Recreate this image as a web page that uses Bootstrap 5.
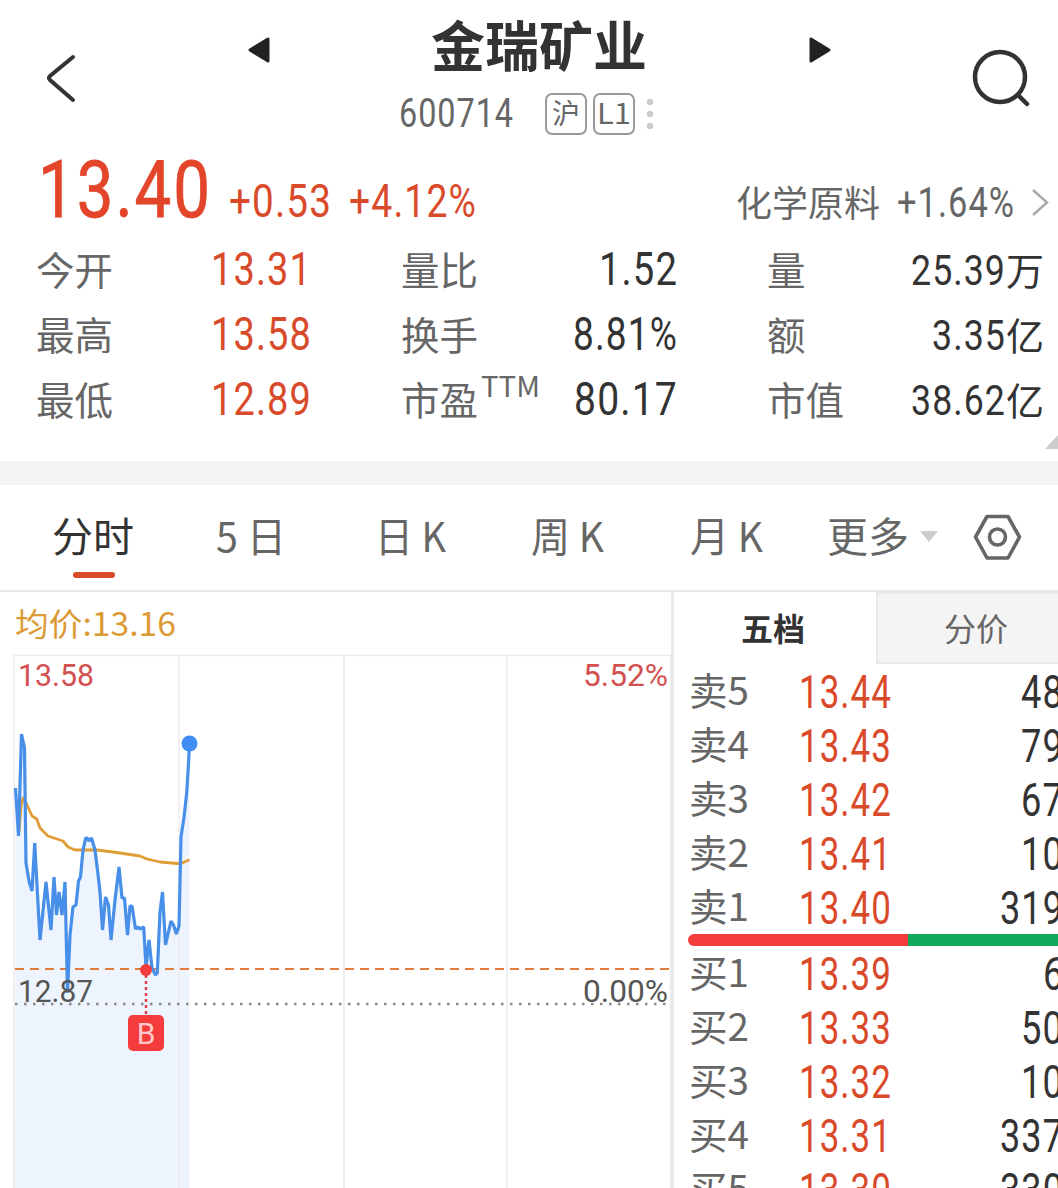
<!DOCTYPE html>
<html lang="zh-CN">
<head>
<meta charset="utf-8">
<meta name="viewport" content="width=device-width, initial-scale=1">
<title>金瑞矿业 600714</title>
<link rel="stylesheet" href="https://cdn.jsdelivr.net/npm/bootstrap@5.3.0/dist/css/bootstrap.min.css">
<style>
  :root { --ink:#333; --soft:#666; --up:#d94a2b; --rule:#e9e9e9; }
  body { width:1058px; height:1188px; overflow:hidden; background:#fff; color:var(--ink);
         font-family:"Noto Sans CJK SC",sans-serif; }
  svg { display:block; flex:none; }
  .fit { display:inline-block; white-space:nowrap; transform-origin:0 50%; flex:none; }
  .din { font-family:Roboto,"Noto Sans CJK SC",sans-serif; }
  .din .fit { letter-spacing:.03em; }
  .up { color:var(--up); }
  .soft { color:var(--soft); }

  .topbar { display:grid; grid-template-columns:248px 151px 410px 163px 86px; height:150px; }
  .stock-name { font-size:54px; font-weight:700; line-height:60px; padding:14px 0 0 32px; height:84px; }
  .stock-code { font-size:40px; line-height:60px; width:146px; }
  .tagbox { width:42px; height:42px; border:2px solid #999; border-radius:7px; font-size:28px; line-height:34px; margin-right:6px; }

  .quote { height:90px; padding-left:38px; }
  .last-price { font-size:80px; line-height:80px; color:#e2452a; width:191px; -webkit-text-stroke:.8px #e2452a; }
  .change { font-size:46px; line-height:60px; }
  .sector { font-size:36px; width:161px; line-height:50px; }
  .sector-pct { font-size:42px; width:133px; line-height:50px; }

  .stats { display:grid; grid-template-columns:175px 190px 130px 147px 89px 100px 177px; grid-auto-rows:65px;
           padding-left:36px; height:221px; position:relative; margin-top:-4px; }
  .stats > div { line-height:64px; font-size:38.5px; }
  .stats .din { font-size:46px; line-height:66px; }
  .stats .unit { font-size:38px; }
  .ttm { font-size:29px; position:relative; top:-18px; left:3px; }
  .corner { position:absolute; right:0; bottom:8px; }
  .band { height:24px; background:#f4f4f4; margin-top:4px; }

  .period-tabs { display:grid; grid-template-columns:164px 159px 156px 159px 137px 146px 85px; height:107px;
                 padding-left:52px; border-bottom:2px solid var(--rule); font-size:41px; }
  .period-tabs > div { line-height:60px; padding-top:19px; }
  .marker-line { width:42px; height:6px; border-radius:3px; background:var(--up); margin:8px 0 0 21px; }

  .panel-chart { width:674px; border-right:3px solid var(--rule); }
  .side-tabs > div { height:72px; font-size:32px; line-height:70px; }
  .tab-on { width:202px; padding-left:67px; font-weight:700; }
  .tab-off { background:#f4f4f4; border:2px solid var(--rule); border-right:0; width:182px; padding-left:66px; }
  .side-tabs > .tab-off { line-height:66px; }
  .lvl { display:grid; grid-template-columns:110px 120px 161px; height:54px; padding-left:15px; }
  .lvl > div { line-height:50px; font-size:38px; }
  .lvl > .din { font-size:46px; line-height:56px; }
  .lvl > .qty { padding-right:16px; }
  .balance { height:12px; margin-left:14px; border-radius:6px 0 0 6px; overflow:hidden; }
  .balance-red { width:220px; background:#f53c3c; }
  .balance-green { background:#12a85b; }
</style>
</head>
<body>
<header class="topbar">
  <svg width="90" height="150" viewBox="0 0 90 150"><path d="M73 57L50 76Q48 78 50 80L73 100" fill="none" stroke="#333" stroke-width="4" stroke-linecap="round"/></svg>
  <svg width="24" height="100" viewBox="0 0 24 100"><path d="M20 39v22L2 50z" fill="#222" stroke="#222" stroke-width="3" stroke-linejoin="round"/></svg>
  <div>
    <div class="stock-name"><span class="fit" data-w="216">金瑞矿业</span></div>
    <div class="d-flex align-items-center soft">
      <div class="stock-code din"><span class="fit" data-w="115">600714</span></div>
      <div class="tagbox text-center"><span class="fit">沪</span></div>
      <div class="tagbox text-center"><span class="fit" data-w="34">L1</span></div>
      <svg width="20" height="42" viewBox="0 0 20 42"><g fill="#ccc"><circle cx="9" cy="9" r="3.2"/><circle cx="9" cy="21" r="3.2"/><circle cx="9" cy="33" r="3.2"/></g></svg>
    </div>
  </div>
  <svg width="24" height="100" viewBox="0 0 24 100"><path d="M2 39v22L20 50z" fill="#222" stroke="#222" stroke-width="3" stroke-linejoin="round"/></svg>
  <svg width="80" height="150" viewBox="0 0 80 150"><g fill="none" stroke="#333" stroke-width="4.5" stroke-linecap="round"><circle cx="28" cy="77" r="25"/><path d="M46 95L55 104"/></g></svg>
</header>

<section class="quote d-flex align-items-baseline">
  <div class="last-price din"><span class="fit" data-w="174">13.40</span></div>
  <div class="change din up" style="width:120px"><span class="fit" data-w="103">+0.53</span></div>
  <div class="change din up" style="width:387px"><span class="fit" data-w="128">+4.12%</span></div>
  <div class="sector soft"><span class="fit" data-w="144">化学原料</span></div>
  <div class="sector-pct din soft"><span class="fit" data-w="118">+1.64%</span></div>
  <svg width="20" height="30" viewBox="0 0 20 30"><path d="M3 3L17 15.500L3 28" fill="none" stroke="#aaa" stroke-width="2.500"/></svg>
</section>

<section class="stats">
  <div class="soft">今开</div><div class="din up"><span class="fit" data-w="101">13.31</span></div>
  <div class="soft">量比</div><div class="din text-end"><span class="fit" data-w="79">1.52</span></div><div></div>
  <div class="soft">量</div><div class="din text-end"><span class="fit" data-w="95" style="font-size:42.500px">25.39</span><span class="unit">万</span></div>
  <div class="soft">最高</div><div class="din up"><span class="fit" data-w="101">13.58</span></div>
  <div class="soft">换手</div><div class="din text-end"><span class="fit" data-w="105">8.81%</span></div><div></div>
  <div class="soft">额</div><div class="din text-end"><span class="fit" data-w="74" style="font-size:42.500px">3.35</span><span class="unit">亿</span></div>
  <div class="soft">最低</div><div class="din up"><span class="fit" data-w="101">12.89</span></div>
  <div class="soft text-nowrap">市盈<span class="ttm fit" data-w="59">TTM</span></div><div class="din text-end"><span class="fit" data-w="104">80.17</span></div><div></div>
  <div class="soft">市值</div><div class="din text-end"><span class="fit" data-w="95" style="font-size:42.500px">38.62</span><span class="unit">亿</span></div>
  <svg class="corner" width="13" height="14"><path d="M0 14L13 0V14z" fill="#ccc"/></svg>
</section>
<div class="band"></div>

<nav class="period-tabs soft">
  <div style="color:#333">分时<div class="marker-line"></div></div>
  <div><span class="fit" data-w="70">5 日</span></div>
  <div><span class="fit" data-w="71">日 K</span></div>
  <div><span class="fit" data-w="73">周 K</span></div>
  <div><span class="fit" data-w="73">月 K</span></div>
  <div class="d-flex">更多<svg class="ms-2" width="22" height="60"><path d="M3 27h18L12 38z" fill="#ccc"/></svg></div>
  <div><svg width="50" height="60" viewBox="0 0 50 60"><g fill="none" stroke="#666" stroke-width="3.600" stroke-linejoin="round"><path d="M14 12.500h21L46.500 33L35 54h-21L2.500 33z"/><circle cx="24.500" cy="33" r="8"/></g></svg></div>
</nav>

<main class="d-flex">
  <section class="panel-chart flex-shrink-0">
    <svg width="671" height="596" viewBox="0 592 671 596" font-family="Roboto,'Noto Sans CJK SC',sans-serif">
      <path d="M15.500 788L18.500 836L21.500 734L24.500 748L26 863L29 881L32 891L34.700 843L40 940L46 882L51 930L54 877L56.500 915L59 892L62 915L65 882L67.500 993L70 935L73 907L76 905L78.500 881L80.500 877L83 850L85.700 838H87.300L89 841L91.500 838L95 850L97.500 870L100 892L102.500 930L105.500 897L108.500 905L111 940L115 900L119 867L122 898H124.500L127.500 935L130 906H132L135.500 929L138 927L140 929L143.700 927L146 967L149 940L152 968L155.500 975L157.300 973L160 912L162.500 892L165.500 945L171 921L173.500 925L176.300 934L179 926L181 837L184 817L186.700 793L188.700 760L189.500 743V1188H15z" fill="#edf4fd"/>
      <path d="M14 1188V655.500H671M179 655V1188M344 655V1188M507 655V1188M670.500 655V1188" fill="none" stroke="#ebecee" stroke-width="1.500"/>
      <path d="M19 832L21 806L23 798L26.700 804L32 816L36.700 819L40 828L48 836L63 841L68 847L75 850H97L113 852L140 856L147 859L160 862L177 863.500L181.500 863.300L189.500 859.700" fill="none" stroke="#e09d36" stroke-width="2.800" stroke-linejoin="round"/>
      <path d="M15 969H669" stroke="#e07d3c" stroke-width="2.200" stroke-dasharray="9 6"/>
      <path d="M15 1004H669" stroke="#888" stroke-width="2.500" stroke-dasharray="2.500 6.500"/>
      <path d="M15.500 788L18.500 836L21.500 734L24.500 748L26 863L29 881L32 891L34.700 843L40 940L46 882L51 930L54 877L56.500 915L59 892L62 915L65 882L67.500 993L70 935L73 907L76 905L78.500 881L80.500 877L83 850L85.700 838H87.300L89 841L91.500 838L95 850L97.500 870L100 892L102.500 930L105.500 897L108.500 905L111 940L115 900L119 867L122 898H124.500L127.500 935L130 906H132L135.500 929L138 927L140 929L143.700 927L146 967L149 940L152 968L155.500 975L157.300 973L160 912L162.500 892L165.500 945L171 921L173.500 925L176.300 934L179 926L181 837L184 817L186.700 793L188.700 760L189.500 743" fill="none" stroke="#478fe8" stroke-width="3.200" stroke-linejoin="bevel"/>
      <circle cx="189.500" cy="743.500" r="8" fill="#3f8df5"/>
      <path d="M146 975V1015" stroke="#e2404a" stroke-width="2.500" stroke-dasharray="3 3"/>
      <circle cx="146" cy="970" r="6" fill="#f53c3c"/>
      <rect x="128" y="1015" width="36" height="36" rx="5" fill="#f53c3c"/>
      <text x="146" y="1044" font-size="30" fill="#ffc9c9" text-anchor="middle">B</text>
      <text x="15" y="636" font-size="32" fill="#dc9a35" textLength="161" lengthAdjust="spacingAndGlyphs" font-family="'Noto Sans CJK SC',sans-serif">均价:13.16</text>
      <text x="18" y="686" font-size="31" fill="#d2504f" textLength="76" lengthAdjust="spacingAndGlyphs">13.58</text>
      <text x="583" y="686" font-size="31" fill="#d2504f" textLength="85" lengthAdjust="spacingAndGlyphs">5.52%</text>
      <text x="18" y="1002" font-size="31" fill="#555" textLength="75" lengthAdjust="spacingAndGlyphs">12.87</text>
      <text x="583" y="1002" font-size="31" fill="#555" textLength="85" lengthAdjust="spacingAndGlyphs">0.00%</text>
    </svg>
  </section>
  <section class="flex-grow-1 overflow-hidden">
    <div class="side-tabs d-flex">
      <div class="tab-on">五档</div>
      <div class="tab-off soft flex-shrink-0">分价</div>
    </div>
    <div class="lvl"><div class="soft"><span class="fit" data-w="60">卖5</span></div><div class="din up"><span class="fit" data-w="93">13.44</span></div><div class="din qty"><span class="fit" data-w="43">48</span></div></div>
    <div class="lvl"><div class="soft"><span class="fit" data-w="60">卖4</span></div><div class="din up"><span class="fit" data-w="93">13.43</span></div><div class="din qty"><span class="fit" data-w="43">79</span></div></div>
    <div class="lvl"><div class="soft"><span class="fit" data-w="60">卖3</span></div><div class="din up"><span class="fit" data-w="93">13.42</span></div><div class="din qty"><span class="fit" data-w="43">67</span></div></div>
    <div class="lvl"><div class="soft"><span class="fit" data-w="60">卖2</span></div><div class="din up"><span class="fit" data-w="93">13.41</span></div><div class="din qty"><span class="fit" data-w="43">10</span></div></div>
    <div class="lvl"><div class="soft"><span class="fit" data-w="60">卖1</span></div><div class="din up"><span class="fit" data-w="93">13.40</span></div><div class="din qty"><span class="fit" data-w="64">319</span></div></div>
    <div class="balance d-flex"><div class="balance-red"></div><div class="balance-green flex-grow-1"></div></div>
    <div class="lvl"><div class="soft"><span class="fit" data-w="60">买1</span></div><div class="din up"><span class="fit" data-w="93">13.39</span></div><div class="din qty"><span class="fit" data-w="21.5">6</span></div></div>
    <div class="lvl"><div class="soft"><span class="fit" data-w="60">买2</span></div><div class="din up"><span class="fit" data-w="93">13.33</span></div><div class="din qty"><span class="fit" data-w="43">50</span></div></div>
    <div class="lvl"><div class="soft"><span class="fit" data-w="60">买3</span></div><div class="din up"><span class="fit" data-w="93">13.32</span></div><div class="din qty"><span class="fit" data-w="43">10</span></div></div>
    <div class="lvl"><div class="soft"><span class="fit" data-w="60">买4</span></div><div class="din up"><span class="fit" data-w="93">13.31</span></div><div class="din qty"><span class="fit" data-w="64">337</span></div></div>
    <div class="lvl"><div class="soft"><span class="fit" data-w="60">买5</span></div><div class="din up"><span class="fit" data-w="93">13.30</span></div><div class="din qty"><span class="fit" data-w="64">330</span></div></div>
  </section>
</main>
<script src="https://cdn.jsdelivr.net/npm/bootstrap@5.3.0/dist/js/bootstrap.bundle.min.js"></script>
<script>
  document.querySelectorAll('.fit[data-w]').forEach(function (el) {
    var natural = el.getBoundingClientRect().width, w = +el.dataset.w;
    el.style.transform = 'scaleX(' + w / natural + ')';
    el.style.width = w + 'px';
    el.style.textAlign = 'left';
  });
  document.querySelectorAll('.qty').forEach(function (el) { el.classList.add('text-end'); });
</script>
</body>
</html>
